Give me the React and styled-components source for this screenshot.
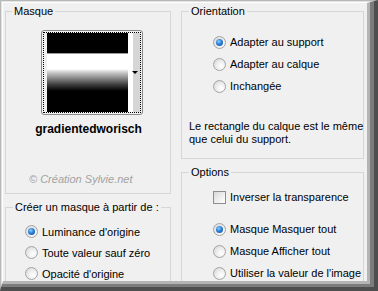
import React from 'react';
import styled, { createGlobalStyle } from "styled-components";

const GlobalStyle = createGlobalStyle`
  html, body {
    margin: 0;
    padding: 0;
    background: #ffffff;
  }
  body {
    font-family: "Liberation Sans", Arial, sans-serif;
    font-size: 11px;
    color: #000;
  }
`

// bevelled picture frame, three nested rings
const Frame = styled.div`
  width: 378px;
  height: 291px;
  box-sizing: border-box;
  border-style: solid;
  border-width: 1px 4px 4px 1px;
  border-color: #b8b8b8 #4e4e4e #4e4e4e #b8b8b8;
`
const FrameMid = styled.div`
  height: 100%;
  box-sizing: border-box;
  border-style: solid;
  border-width: 1px 4px 3px 1px;
  border-color: #e2e2e2 #7c7c7c #7c7c7c #e2e2e2;
`
const FrameInner = styled.div`
  height: 100%;
  box-sizing: border-box;
  border-style: solid;
  border-width: 1px 3px 3px 1px;
  border-color: #ffffff #b4b4b4 #b4b4b4 #ffffff;
`

const Dialog = styled.div`
  height: 100%;
  box-sizing: border-box;
  background: #f0f0f0;
  display: grid;
  grid-template-columns: 166px 183px;
  column-gap: 10px;
  padding: 2px 3px 0 2px;
  overflow: hidden;
`

const Column = styled.div`
  display: flex;
  flex-direction: column;
  gap: 7px;
  min-height: 0;
`

const Group = styled.fieldset`
  margin: 0;
  min-width: 0;
  box-sizing: border-box;
  border: 1px solid #d6d6d6;
  border-bottom: ${props => props.$open ? 'none' : '1px solid #d6d6d6'};
  padding: ${props => props.$pad || '0'};
  height: ${props => props.$h ? props.$h + 'px' : 'auto'};
  flex: ${props => props.$grow ? 1 : 'none'};
  display: flex;
  flex-direction: column;
`

const Legend = styled.legend`
  margin-left: ${props => props.$shift ?? 6}px;
  padding: 0 2px;
  font-size: 11px;
  line-height: 13px;
  white-space: nowrap;
`

const Preview = styled.div`
  align-self: center;
  margin-left: 7px;
  border: 1px solid #8a8a8a;
  border-radius: 3px;
  padding: 1px;
`

const Dotted = styled.div`
  display: flex;
  border: 1px dotted #000;
  padding: 0 0 0 3px;
`

const Mask = styled.div`
  width: 81px;
  height: 79px;
  background: linear-gradient(
    to bottom,
    #000 0px, #000 20px,
    #9a9a9a 20px, #9a9a9a 21px,
    #fff 21px, #fff 36px,
    #d0d0d0 39px, #8a8a8a 45px, #3a3a3a 52px,
    #000 58px, #000 79px
  );
`

const Strip = styled.div`
  width: 12px;
  display: flex;
  align-items: center;
  justify-content: flex-end;
  background: linear-gradient(to right, #fff 0, #fff 5px, #d6d6d6 5px);
`

const Arrow = styled.span`
  width: 0;
  height: 0;
  margin-right: 2px;
  border-left: 3px solid transparent;
  border-right: 3px solid transparent;
  border-top: 3px solid #000;
`

const MaskName = styled.div`
  margin-top: 7px;
  margin-left: 1px;
  text-align: center;
  font-weight: bold;
  font-size: 12px;
  line-height: 14px;
`

const Credit = styled.div`
  margin-top: 37px;
  padding-left: 23px;
  font-style: italic;
  font-size: 11px;
  line-height: 13px;
  color: #a2a2a2;
`

const OptionList = styled.div`
  display: flex;
  flex-direction: column;
  padding-left: ${props => props.$indent || 0}px;
  margin-top: ${props => props.$top || 0}px;
`

const OptionRow = styled.label`
  display: flex;
  align-items: center;
  gap: 4px;
  height: ${props => props.$h || 22}px;
  font-size: 11px;
  white-space: nowrap;
`

const Radio = styled.span`
  flex: none;
  width: 13px;
  height: 13px;
  box-sizing: border-box;
  border-radius: 50%;
  border: 1px solid #a4a4a4;
  background: radial-gradient(circle at 65% 65%, #ffffff 0, #f2f2f2 35%, #d2d2d2 100%);
  display: flex;
  align-items: center;
  justify-content: center;

  &::after {
    content: '';
    display: ${props => props.$on ? 'block' : 'none'};
    width: 7px;
    height: 7px;
    border-radius: 50%;
    background: radial-gradient(circle at 40% 35%, #8fd0ff 0, #2a7fd6 45%, #0a4d9c 100%);
  }
`

const Check = styled.span`
  flex: none;
  width: 13px;
  height: 13px;
  box-sizing: border-box;
  border: 1px solid #8e8e8e;
  background: linear-gradient(135deg, #d8d8d8 0, #f4f4f4 70%, #ffffff 100%);
`

const Note = styled.div`
  width: 180px;
  margin-top: 23px;
  font-size: 11px;
  line-height: 13px;
`

function Choice({ on, h, children }) {
  return (
    <OptionRow $h={h}>
      <Radio $on={on} />
      {children}
    </OptionRow>
  );
}

function App() {
  return (
    <>
      <GlobalStyle />
      <Frame>
        <FrameMid>
          <FrameInner>
            <Dialog>
              <Column>
                <Group $h={189} $pad="12px 0 0 0">
                  <Legend>Masque</Legend>
                  <Preview>
                    <Dotted>
                      <Mask />
                      <Strip><Arrow /></Strip>
                    </Dotted>
                  </Preview>
                  <MaskName>gradientedworisch</MaskName>
                  <Credit>© Création Sylvie.net</Credit>
                </Group>
                <Group $grow $open $pad="7px 0 0 7px">
                  <Legend $shift={0}>Créer un masque à partir de :</Legend>
                  <OptionList $indent={12}>
                    <Choice on h={21}>Luminance d'origine</Choice>
                    <Choice h={21}>Toute valeur sauf zéro</Choice>
                    <Choice h={21}>Opacité d'origine</Choice>
                  </OptionList>
                </Group>
              </Column>
              <Column>
                <Group $h={154} $pad="13px 0 0 7px">
                  <Legend $shift={0}>Orientation</Legend>
                  <OptionList $indent={24}>
                    <Choice on>Adapter au support</Choice>
                    <Choice>Adapter au calque</Choice>
                    <Choice>Inchangée</Choice>
                  </OptionList>
                  <Note>Le rectangle du calque est le même que celui du support.</Note>
                </Group>
                <Group $grow $open $pad="7px 0 0 7px">
                  <Legend $shift={0}>Options</Legend>
                  <OptionList $indent={24}>
                    <OptionRow>
                      <Check />
                      Inverser la transparence
                    </OptionRow>
                  </OptionList>
                  <OptionList $indent={24} $top={10}>
                    <Choice on>Masque Masquer tout</Choice>
                    <Choice>Masque Afficher tout</Choice>
                    <Choice>Utiliser la valeur de l'image</Choice>
                  </OptionList>
                </Group>
              </Column>
            </Dialog>
          </FrameInner>
        </FrameMid>
      </Frame>
    </>
  );
}

export default App;
